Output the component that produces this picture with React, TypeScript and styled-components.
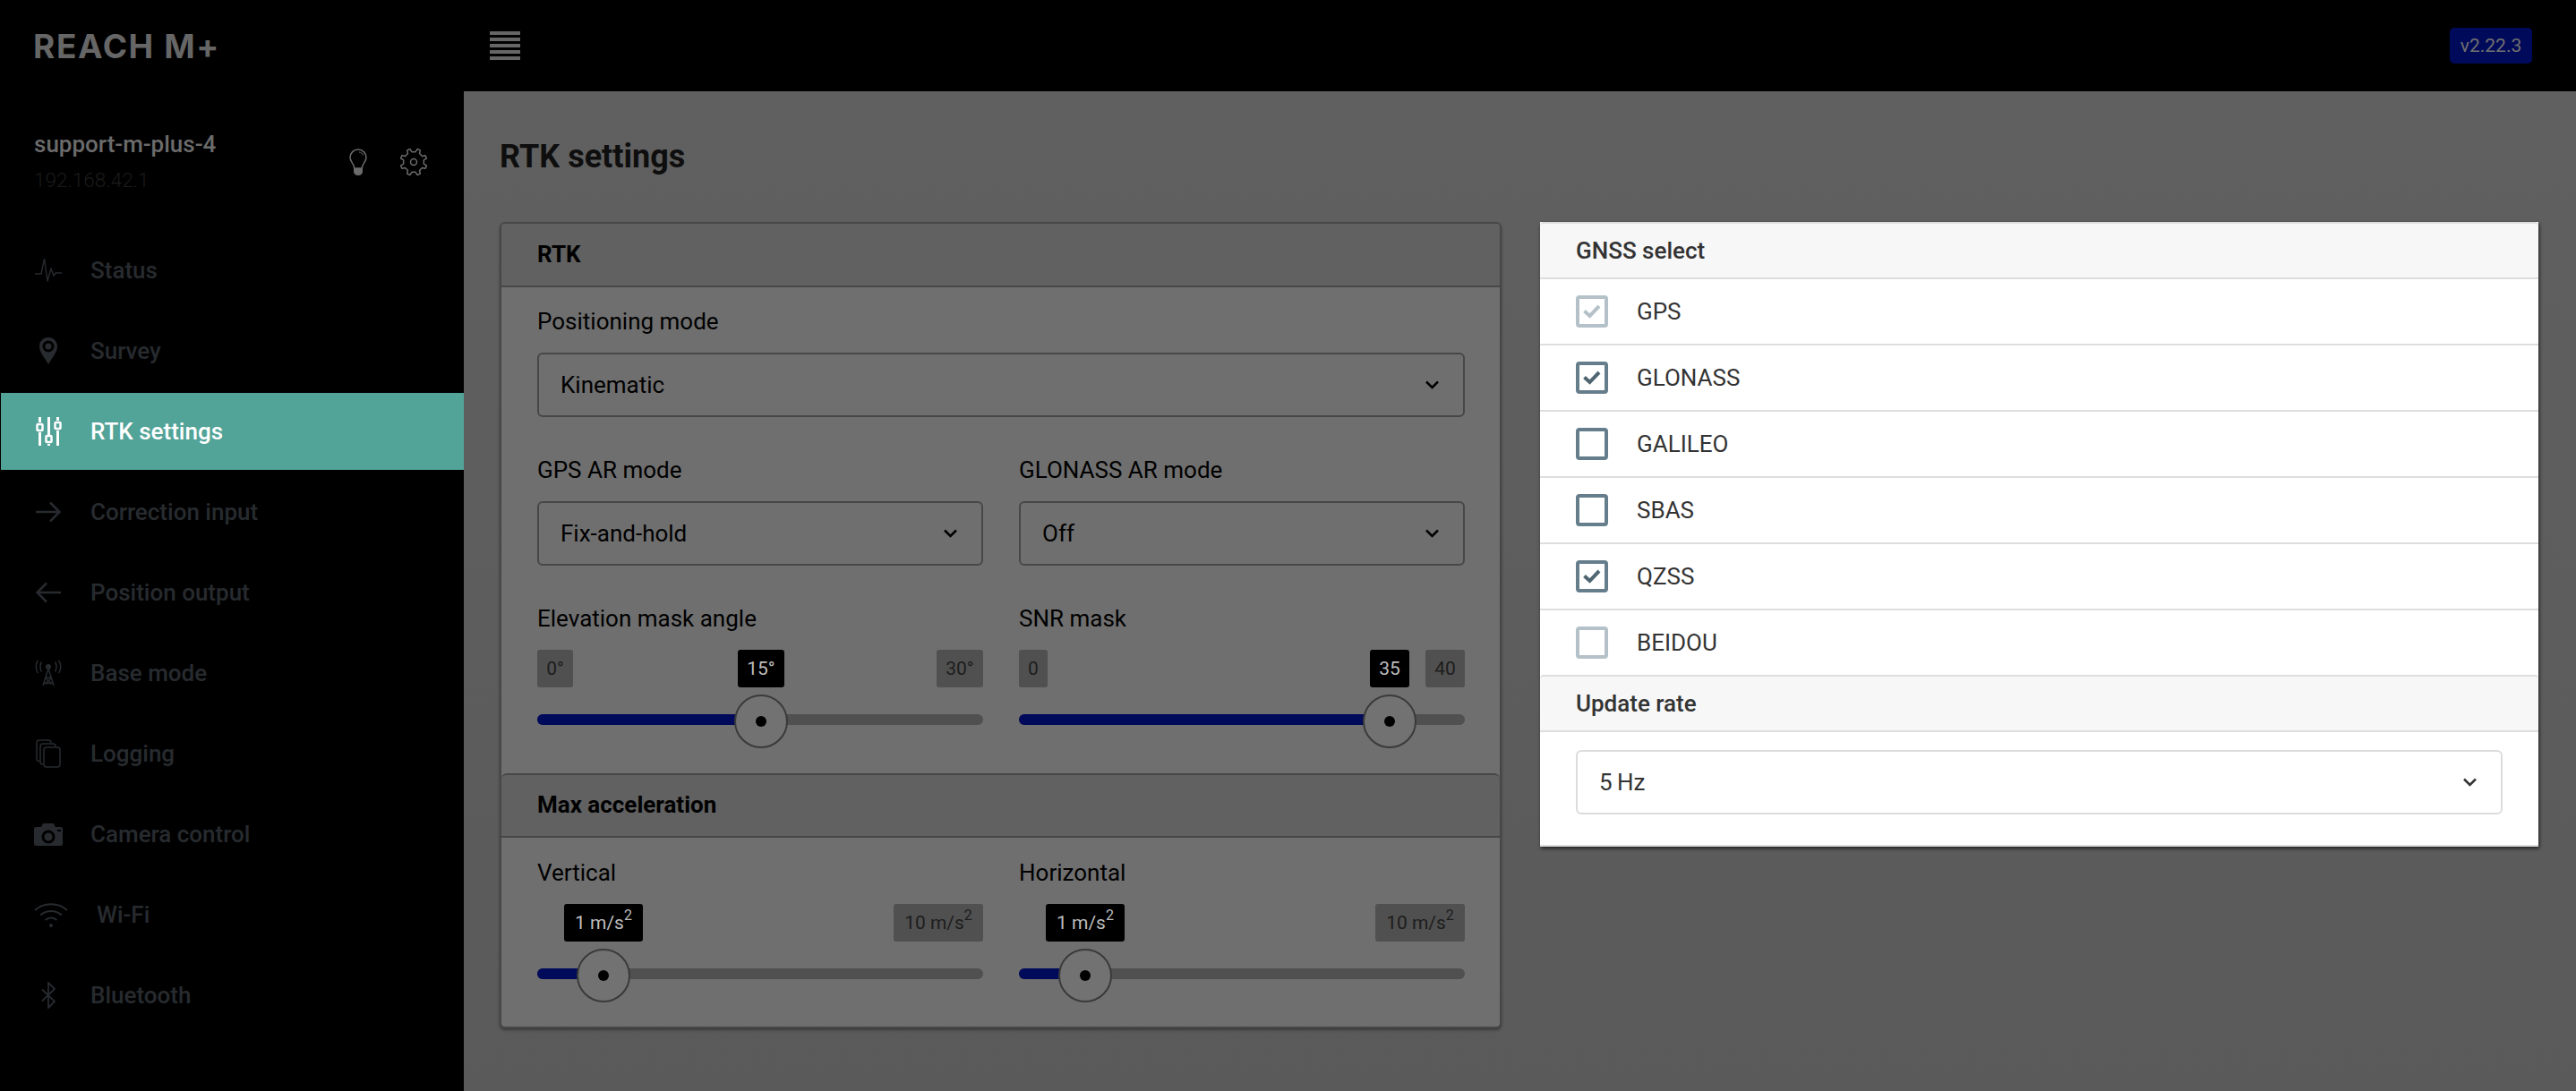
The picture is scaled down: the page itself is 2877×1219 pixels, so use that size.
import React from "react";
import styled, { createGlobalStyle } from "styled-components";

const Global = createGlobalStyle`
  html, body { margin: 0; padding: 0; background: #000; }
  body { font-family: Roboto, "Liberation Sans", sans-serif; font-size: 26px; overflow: hidden; }
  #root { width: 2877px; height: 1219px; overflow: hidden; }
  * { box-sizing: border-box; }
`;

const Page = styled.div`
  display: grid;
  grid-template-rows: 102px 1fr;
  width: 2877px;
  height: 1219px;
`;

const TopBar = styled.header`
  display: flex;
  align-items: center;
  background: #000;
  padding: 0 49px 0 37px;
`;

const Logo = styled.div`
  width: 510px;
  font-family: Inter, sans-serif;
  font-weight: 700;
  font-size: 37px;
  line-height: 1;
  letter-spacing: 1.6px;
  color: #666;
`;

const Burger = styled.div`
  display: flex;
  flex-direction: column;
  gap: 3px;
  width: 34px;
`;

const BurgerBar = styled.span`
  display: block;
  height: 4px;
  background: #666;
`;

const Version = styled.div`
  margin-left: auto;
  height: 40px;
  width: 92px;
  display: flex;
  align-items: center;
  justify-content: center;
  background: #000a5a;
  border-radius: 5px;
  color: #707070;
  font-size: 21px;
`;

const Body = styled.div`
  display: grid;
  grid-template-columns: 518px 1fr;
  min-height: 0;
`;

const Sidebar = styled.aside`
  background: #000;
  padding-top: 41px;
`;

const Device = styled.div`
  display: flex;
  align-items: center;
  padding: 0 40px 0 38px;
`;

const DeviceText = styled.div`
  flex: 1;
`;

const DeviceName = styled.div`
  font-weight: 500;
  line-height: 36px;
  color: #6b6b6b;
`;

const DeviceIp = styled.div`
  margin-top: 4px;
  font-weight: 300;
  font-size: 22.5px;
  line-height: 36px;
  color: #1b1b1b;
`;

const DeviceIcons = styled.div`
  display: flex;
  align-items: center;
  gap: 36px;
  color: #6b6b6b;
`;

const Nav = styled.nav`
  display: flex;
  flex-direction: column;
  gap: 4px;
  margin-top: 40px;
`;

const NavItem = styled.div<{ $active?: boolean }>`
  display: flex;
  align-items: center;
  gap: 31px;
  height: 86px;
  margin-left: 1px;
  padding-left: 37px;
  font-weight: 500;
  background: ${(p) => (p.$active ? "#52a398" : "transparent")};
  color: ${(p) => (p.$active ? "#fff" : "#272b2f")};
`;

const NavIcon = styled.span<{ $wide?: boolean }>`
  display: flex;
  justify-content: ${(p) => (p.$wide ? "flex-start" : "center")};
  width: ${(p) => (p.$wide ? "39px" : "32px")};
  flex: none;
`;

const Main = styled.main`
  background: linear-gradient(#606060, #5a5a5a);
  padding: 51px 0 0 40px;
`;

const Title = styled.h1`
  margin: 0 0 51px;
  font-size: 36px;
  line-height: 44px;
  font-weight: 700;
  color: #0e0e0e;
`;

const Columns = styled.div`
  display: grid;
  grid-template-columns: 1119px 1115px;
  gap: 43px;
  align-items: start;
`;

const DarkCard = styled.section`
  border: 2px solid #474747;
  border-radius: 6px;
  background: #6f6f6f;
  box-shadow: 0 2px 3px rgba(0, 0, 0, 0.35);
  color: #000;
`;

const DarkHead = styled.div<{ $second?: boolean }>`
  display: flex;
  align-items: center;
  height: ${(p) => (p.$second ? "72px" : "71px")};
  padding: 0 0 2px 40px;
  background: #616161;
  font-weight: 700;
  border-bottom: 2px solid #474747;
  border-top: ${(p) => (p.$second ? "2px solid #474747" : "none")};
  border-radius: ${(p) => (p.$second ? "6px 6px 0 0" : "4px 4px 0 0")};
`;

const DarkBody = styled.div<{ $top: number; $bottom: number }>`
  display: flex;
  flex-direction: column;
  gap: 41px;
  padding: ${(p) => p.$top}px 39px ${(p) => p.$bottom}px 40px;
`;

const FieldRow = styled.div`
  display: grid;
  grid-template-columns: 498px 498px;
  gap: 40px;
`;

const Field = styled.div<{ $full?: boolean }>`
  display: flex;
  flex-direction: column;
  gap: 17px;
  grid-column: ${(p) => (p.$full ? "1 / -1" : "auto")};
`;

const Label = styled.div`
  line-height: 36px;
`;

const SelectBox = styled.div<{ $light?: boolean }>`
  display: flex;
  align-items: center;
  justify-content: space-between;
  height: 72px;
  padding: 0 27px 0 24px;
  border: 2px solid ${(p) => (p.$light ? "#dcdcdc" : "#474747")};
  border-radius: 6px;
  color: ${(p) => (p.$light ? "#333" : "#000")};
`;

const SliderBox = styled.div`
  position: relative;
  height: 84px;
`;

const PillRow = styled.div`
  display: flex;
  justify-content: space-between;
`;

const Pill = styled.div<{ $current?: boolean; $w: number; $end?: boolean }>`
  display: flex;
  align-items: center;
  justify-content: center;
  width: ${(p) => p.$w}px;
  height: 42px;
  margin-left: ${(p) => (p.$end ? "auto" : "0")};
  border-radius: 3px;
  font-size: 21px;
  background: ${(p) => (p.$current ? "#000" : "#505050")};
  color: ${(p) => (p.$current ? "#bdbdbd" : "#1d1d1d")};
  white-space: nowrap;
`;

const CurrentPill = styled(Pill)`
  position: absolute;
  top: 0;
  transform: translateX(-50%);
`;

const PillText = styled.span`
  display: block;
`;

const Sup = styled.sup`
  font-size: 16px;
  line-height: 0;
  vertical-align: 10px;
`;

const Track = styled.div`
  position: absolute;
  left: 0;
  right: 0;
  top: 72px;
  height: 12px;
  border-radius: 6px;
  background: #505050;
  overflow: hidden;
`;

const TrackFill = styled.div`
  height: 100%;
  background: #000a5a;
`;

const Thumb = styled.div`
  position: absolute;
  top: 50px;
  width: 60px;
  height: 60px;
  margin-left: -30px;
  display: flex;
  align-items: center;
  justify-content: center;
  border: 2px solid #3a3a3a;
  border-radius: 50%;
  background: #727272;
`;

const ThumbDot = styled.span`
  width: 12px;
  height: 12px;
  border-radius: 50%;
  background: #000;
`;

const LightCard = styled.section`
  background: #fff;
  color: #333;
  border-bottom: 2px solid #dedede;
  box-shadow: 1px 2px 4px rgba(0, 0, 0, 0.65);
`;

const LightHead = styled.div`
  display: flex;
  align-items: center;
  height: 64px;
  padding-left: 40px;
  background: #f7f7f7;
  border-top: 2px solid #dedede;
  border-bottom: 2px solid #dedede;
  font-weight: 500;
  border-radius: 4px 4px 0 0;
`;

const CheckRow = styled.label`
  display: flex;
  align-items: center;
  gap: 32px;
  height: 74px;
  padding-left: 40px;
  border-bottom: 2px solid #dedede;
  &:last-of-type {
    border-bottom: none;
    height: 72px;
  }
`;

const CheckBox = styled.span<{ $disabled?: boolean }>`
  display: flex;
  align-items: center;
  justify-content: center;
  width: 36px;
  height: 36px;
  border: 4px solid ${(p) => (p.$disabled ? "#b5c1c8" : "#667e8c")};
  border-radius: 4px;
  color: ${(p) => (p.$disabled ? "#b5c1c8" : "#4f6672")};
`;

const LightBody = styled.div`
  padding: 20px 40px 34px;
`;

const PinPath = "M11 1C5 1 1 5.5 1 11c0 6.5 6 13 10 20 4-7 10-13.5 10-20C21 5.5 17 1 11 1z";

function gearPath(cx: number, cy: number, outer: number, inner: number, teeth: number) {
  const pts: string[] = [];
  for (let i = 0; i < teeth; i++) {
    const a = (i / teeth) * Math.PI * 2;
    const step = (Math.PI * 2) / teeth;
    const list: [number, number][] = [
      [a - step * 0.27, inner],
      [a - step * 0.15, outer],
      [a + step * 0.15, outer],
      [a + step * 0.27, inner],
    ];
    for (const [ang, r] of list) {
      pts.push(`${(cx + r * Math.cos(ang)).toFixed(2)} ${(cy + r * Math.sin(ang)).toFixed(2)}`);
    }
  }
  return `M${pts.join("L")}Z`;
}

const Bulb = () => (
  <svg width="20" height="30" viewBox="0 0 20 30" fill="none" stroke="currentColor" strokeWidth="1.5">
    <path d="M10 1a9 9 0 0 0-9 9c0 4 3 6 4 9l.7 3h8.6l.7-3c1-3 4-5 4-9a9 9 0 0 0-9-9z" />
    <path d="M11 4c2 0 4 1.500 4.500 3.500" strokeWidth="1" />
    <path d="M5 22h10v4c0 2-2 4-5 4s-5-2-5-4z" fill="currentColor" stroke="none" />
  </svg>
);

const Gear = () => (
  <svg width="32" height="32" viewBox="0 0 32 32" fill="none" stroke="currentColor" strokeWidth="1.5">
    <path d={gearPath(16, 16, 15, 11.5, 8)} strokeLinejoin="round" transform="rotate(22.500 16 16)" />
    <circle cx="16" cy="16" r="3.500" />
  </svg>
);

const Pulse = () => (
  <svg width="30" height="26" viewBox="0 0 30 26" fill="none" stroke="currentColor" strokeWidth="1.400">
    <path d="M0 17h7L10.500 0 14 25l4-14 3 8 2-3h7" strokeLinejoin="round" />
  </svg>
);

const Pin = () => (
  <svg width="22" height="32" viewBox="0 0 22 32">
    <path d={PinPath} fill="currentColor" />
    <circle cx="11" cy="11" r="6.500" fill="#000" />
    <circle cx="11" cy="11" r="3.500" fill="currentColor" />
  </svg>
);

const Sliders = () => (
  <svg width="29" height="32" viewBox="0 0 29 32" fill="none" stroke="currentColor" strokeWidth="3">
    <path d="M4.500 0v6M4.500 17v15M14.500 0v20M14.500 30v2M24.500 0v4M24.500 15v17" />
    <rect x="1.500" y="8" width="6" height="7" rx="1" strokeWidth="2.500" />
    <rect x="11.500" y="21" width="6" height="7" rx="1" strokeWidth="2.500" />
    <rect x="21.500" y="6" width="6" height="7" rx="1" strokeWidth="2.500" />
  </svg>
);

const ArrowRight = () => (
  <svg width="28" height="24" viewBox="0 0 28 24" fill="none" stroke="currentColor" strokeWidth="2.500">
    <path d="M0 12h26M16 1.500 26.500 12 16 22.500" />
  </svg>
);

const ArrowLeft = () => (
  <svg width="28" height="24" viewBox="0 0 28 24" fill="none" stroke="currentColor" strokeWidth="2.500">
    <path d="M28 12H2M12 1.500 1.500 12 12 22.500" />
  </svg>
);

const Tower = () => (
  <svg width="32" height="30" viewBox="0 0 32 30" fill="none" stroke="currentColor" strokeWidth="1.500">
    <circle cx="16" cy="8" r="3" fill="currentColor" stroke="none" />
    <path d="M16 10 10 29M16 10l6 19M12.500 20h7M10.500 26.500h11M12 20l8 7M20 20l-8 7" />
    <path d="M8.500 2.500c-2 3-2 8 0 11M4.500 1c-3 4-3 10 0 14M23.500 2.500c2 3 2 8 0 11M27.500 1c3 4 3 10 0 14" />
  </svg>
);

const Stack = () => (
  <svg width="28" height="32" viewBox="0 0 28 32" fill="none" stroke="currentColor" strokeWidth="1.500">
    <path d="M4 24.500c-2 0-3-1-3-3V4c0-2 1-3 3-3h10c2 0 3 1 3 3" />
    <path d="M8 28c-2 0-3-1-3-3V8c0-2 1-3 3-3h11c2 0 3 1 3 3" />
    <rect x="9" y="9" width="18" height="22" rx="3" />
  </svg>
);

const Camera = () => (
  <svg width="32" height="25" viewBox="0 0 32 25">
    <path
      fillRule="evenodd"
      fill="currentColor"
      d="M2 4h6l2-4h12l2 4h6c1 0 2 1 2 2v17c0 1-1 2-2 2H2c-1 0-2-1-2-2V6c0-1 1-2 2-2zm14 3.500a7.500 7.500 0 1 0 0 15 7.500 7.500 0 0 0 0-15zm0 3a4.500 4.500 0 1 1 0 9 4.500 4.500 0 0 1 0-9zM26 7v2h4V7z"
    />
  </svg>
);

const Wifi = () => (
  <svg width="38" height="27" viewBox="0 0 38 27" fill="none" stroke="currentColor" strokeWidth="2">
    <path d="M1 8c10-9 26-9 36 0M7 13.500c7-6 17-6 24 0M12.500 19c4-3.500 9-3.500 13 0" />
    <circle cx="19" cy="25" r="2" fill="currentColor" stroke="none" />
  </svg>
);

const Bluetooth = () => (
  <svg width="16" height="30" viewBox="0 0 16 30" fill="none" stroke="currentColor" strokeWidth="1.800">
    <path d="M1 8.500 15 22 8 29V1l7 7L1 21.500" />
  </svg>
);

const Chevron = () => (
  <svg width="15" height="10" viewBox="0 0 15 10" fill="none" stroke="currentColor" strokeWidth="2.500">
    <path d="M1 1.500 7.500 8 14 1.500" />
  </svg>
);

const Check = () => (
  <svg width="20" height="16" viewBox="0 0 20 16" fill="none" stroke="currentColor" strokeWidth="4">
    <path d="M1.500 7.500 7.500 13 18 2" />
  </svg>
);

type PillSpec = { text: React.ReactNode; w: number };

type SliderProps = {
  min?: PillSpec;
  max: PillSpec;
  value: PillSpec;
  at: number;
};

function Slider({ min, max, value, at }: SliderProps) {
  return (
    <SliderBox>
      <PillRow>
        {min && <Pill $w={min.w}>{min.text}</Pill>}
        <Pill $w={max.w} $end>
          {max.text}
        </Pill>
      </PillRow>
      <CurrentPill $current $w={value.w} style={{ left: at }}>
        {value.text}
      </CurrentPill>
      <Track>
        <TrackFill style={{ width: at }} />
      </Track>
      <Thumb style={{ left: at }}>
        <ThumbDot />
      </Thumb>
    </SliderBox>
  );
}

const navItems: { label: string; icon: React.ReactNode; active?: boolean; wide?: boolean }[] = [
  { label: "Status", icon: <Pulse /> },
  { label: "Survey", icon: <Pin /> },
  { label: "RTK settings", icon: <Sliders />, active: true },
  { label: "Correction input", icon: <ArrowRight /> },
  { label: "Position output", icon: <ArrowLeft /> },
  { label: "Base mode", icon: <Tower /> },
  { label: "Logging", icon: <Stack /> },
  { label: "Camera control", icon: <Camera /> },
  { label: "Wi-Fi", icon: <Wifi />, wide: true },
  { label: "Bluetooth", icon: <Bluetooth /> },
];

const gnss = [
  { name: "GPS", checked: true, disabled: true },
  { name: "GLONASS", checked: true },
  { name: "GALILEO" },
  { name: "SBAS" },
  { name: "QZSS", checked: true },
  { name: "BEIDOU", disabled: true },
];

const accelMax: PillSpec = {
  text: (
    <PillText>
      10 m/s<Sup>2</Sup>
    </PillText>
  ),
  w: 100,
};

const accelValue: PillSpec = {
  text: (
    <PillText>
      1 m/s<Sup>2</Sup>
    </PillText>
  ),
  w: 88,
};

export default function App() {
  return (
    <Page>
      <Global />
      <TopBar>
        <Logo>REACH M+</Logo>
        <Burger>
          {[0, 1, 2, 3, 4].map((i) => (
            <BurgerBar key={i} />
          ))}
        </Burger>
        <Version>v2.22.3</Version>
      </TopBar>
      <Body>
        <Sidebar>
          <Device>
            <DeviceText>
              <DeviceName>support-m-plus-4</DeviceName>
              <DeviceIp>192.168.42.1</DeviceIp>
            </DeviceText>
            <DeviceIcons>
              <Bulb />
              <Gear />
            </DeviceIcons>
          </Device>
          <Nav>
            {navItems.map((n) => (
              <NavItem key={n.label} $active={n.active}>
                <NavIcon $wide={n.wide}>{n.icon}</NavIcon>
                {n.label}
              </NavItem>
            ))}
          </Nav>
        </Sidebar>
        <Main>
          <Title>RTK settings</Title>
          <Columns>
            <DarkCard>
              <DarkHead>RTK</DarkHead>
              <DarkBody $top={20} $bottom={54}>
                <FieldRow>
                  <Field $full>
                    <Label>Positioning mode</Label>
                    <SelectBox>
                      Kinematic
                      <Chevron />
                    </SelectBox>
                  </Field>
                </FieldRow>
                <FieldRow>
                  <Field>
                    <Label>GPS AR mode</Label>
                    <SelectBox>
                      Fix-and-hold
                      <Chevron />
                    </SelectBox>
                  </Field>
                  <Field>
                    <Label>GLONASS AR mode</Label>
                    <SelectBox>
                      Off
                      <Chevron />
                    </SelectBox>
                  </Field>
                </FieldRow>
                <FieldRow>
                  <Field>
                    <Label>Elevation mask angle</Label>
                    <Slider
                      min={{ text: "0°", w: 40 }}
                      max={{ text: "30°", w: 52 }}
                      value={{ text: "15°", w: 52 }}
                      at={250}
                    />
                  </Field>
                  <Field>
                    <Label>SNR mask</Label>
                    <Slider
                      min={{ text: "0", w: 32 }}
                      max={{ text: "40", w: 44 }}
                      value={{ text: "35", w: 44 }}
                      at={414}
                    />
                  </Field>
                </FieldRow>
              </DarkBody>
              <DarkHead $second>Max acceleration</DarkHead>
              <DarkBody $top={21} $bottom={53}>
                <FieldRow>
                  <Field>
                    <Label>Vertical</Label>
                    <Slider max={accelMax} value={accelValue} at={74} />
                  </Field>
                  <Field>
                    <Label>Horizontal</Label>
                    <Slider max={accelMax} value={accelValue} at={74} />
                  </Field>
                </FieldRow>
              </DarkBody>
            </DarkCard>
            <LightCard>
              <LightHead>GNSS select</LightHead>
              <div>
                {gnss.map((g) => (
                  <CheckRow key={g.name}>
                    <CheckBox $disabled={g.disabled}>{g.checked && <Check />}</CheckBox>
                    {g.name}
                  </CheckRow>
                ))}
              </div>
              <LightHead>Update rate</LightHead>
              <LightBody>
                <SelectBox $light>
                  5{"\u2009"}Hz
                  <Chevron />
                </SelectBox>
              </LightBody>
            </LightCard>
          </Columns>
        </Main>
      </Body>
    </Page>
  );
}
